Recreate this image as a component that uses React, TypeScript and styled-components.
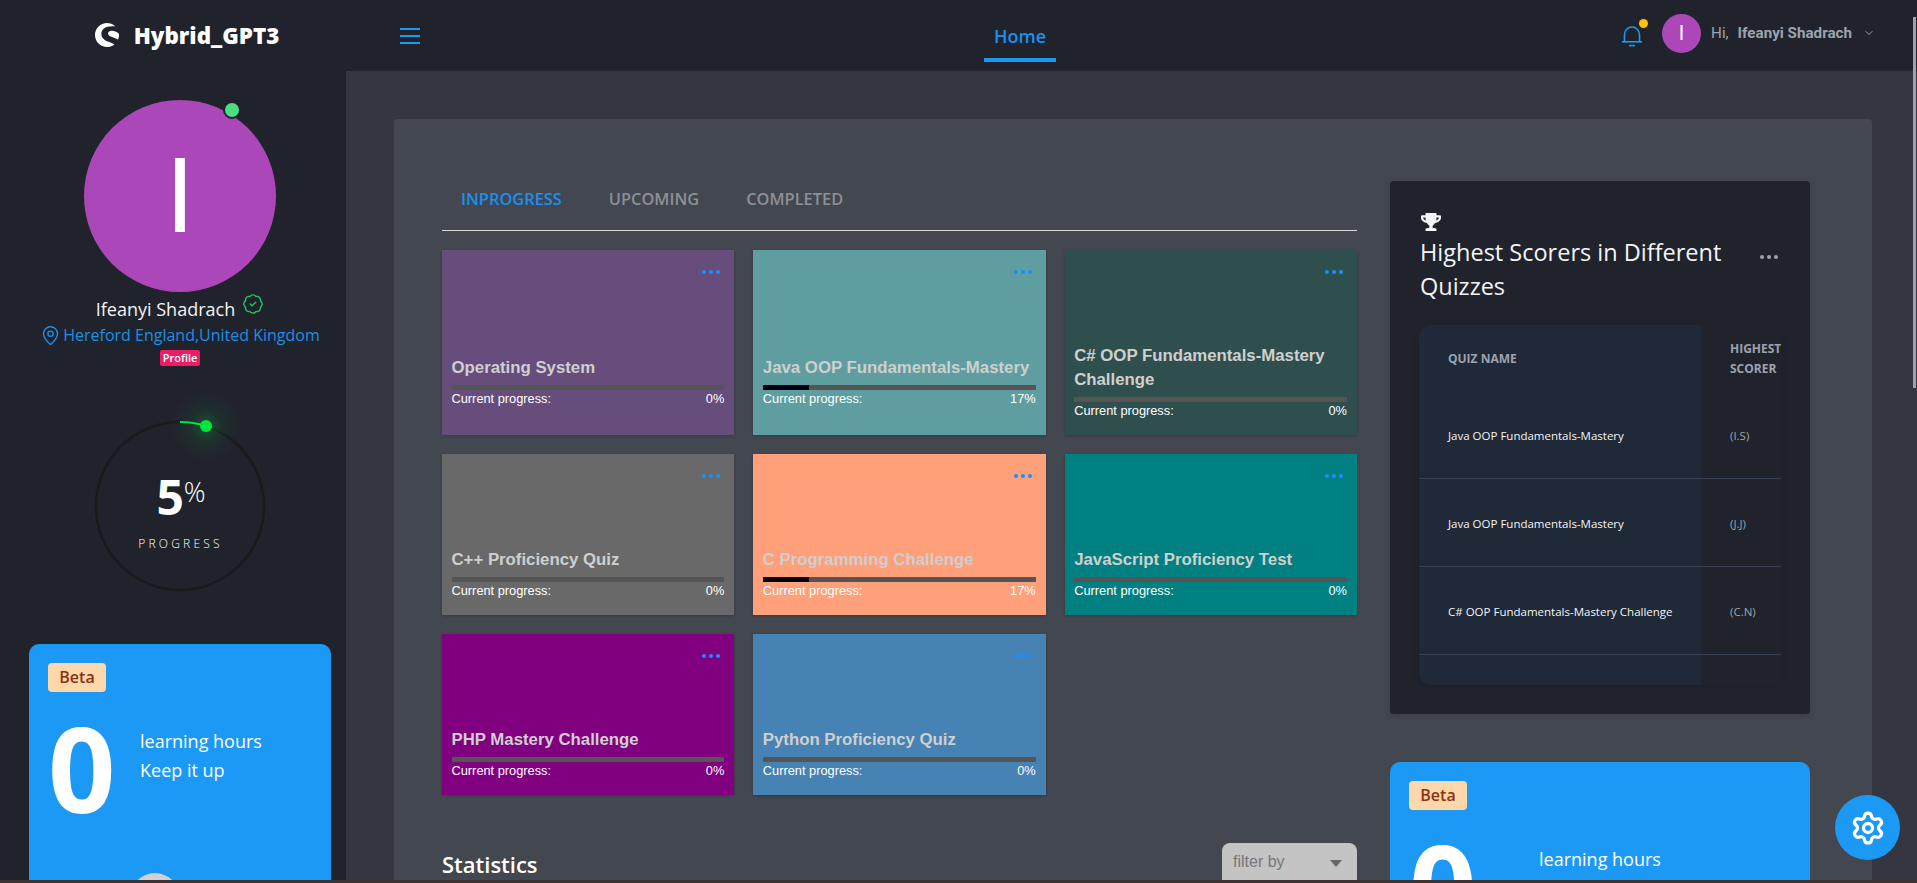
import { createGlobalStyle, styled } from 'styled-components';
import { BadgeCheck, ChevronDown, MapPin, Settings } from 'lucide-react';
import { FaTrophy } from 'react-icons/fa';
import { SiShopware } from 'react-icons/si';

const GlobalStyle = createGlobalStyle`
  html, body {
    margin: 0;
    height: 100%;
    overflow: hidden;
    background: #343740;
    font-family: 'Open Sans', sans-serif;
  }
  * {
    box-sizing: border-box;
  }
`;

const Page = styled.div`
  display: flex;
  flex-direction: column;
  height: 100vh;
`;

const Frame = styled.div`
  flex: 1;
  display: flex;
  min-height: 0;
`;

const BottomEdge = styled.div`
  height: 3px;
  background: #3b3432;
`;

/* sidebar */

const Sidebar = styled.aside`
  width: 346px;
  flex-shrink: 0;
  background: #20232c;
  display: flex;
  flex-direction: column;
  align-items: center;
  overflow: hidden;
  padding: 20px 0 0 14px;
`;

const Brand = styled.div`
  height: 30px;
  display: flex;
  align-items: center;
  gap: 15px;
  margin-left: 14px;
  color: #fff;
  font-size: 22.4px;
  font-weight: 800;
  white-space: nowrap;
`;

const AvatarWrap = styled.div`
  position: relative;
  margin-top: 50px;
`;

const Avatar = styled.div<{ $size: number; $font: number }>`
  width: ${(p) => p.$size}px;
  height: ${(p) => p.$size}px;
  border-radius: 50%;
  background: #ab47b8;
  color: #fff;
  font-family: Roboto, sans-serif;
  font-size: ${(p) => p.$font}px;
  display: flex;
  align-items: center;
  justify-content: center;
  flex-shrink: 0;
`;

const OnlineDot = styled.span`
  position: absolute;
  top: 1px;
  right: 35px;
  width: 18px;
  height: 18px;
  border-radius: 50%;
  background: #4ade80;
  border: 2px solid #20232c;
`;

const NameRow = styled.div`
  height: 24px;
  margin-top: 5px;
  display: flex;
  align-items: center;
  gap: 7px;
  color: #f3f4f6;
  font-size: 18px;
  svg {
    margin-top: -10px;
  }
`;

const LocationRow = styled.div`
  height: 24px;
  margin-top: 3px;
  display: flex;
  align-items: center;
  gap: 2px;
  color: #1e8ee6;
  font-size: 16px;
  white-space: nowrap;
`;

const ProfileBadge = styled.span`
  margin-top: 4px;
  height: 16px;
  width: 40px;
  border-radius: 2px;
  background: #e91e63;
  color: #fff;
  font-size: 11px;
  font-weight: 600;
  line-height: 16px;
  text-align: center;
`;

const Ring = styled.div`
  margin-top: 55px;
  display: grid;
  width: 170px;
  height: 170px;
  flex-shrink: 0;
  > * {
    grid-area: 1 / 1;
  }
`;

const RingCenter = styled.div`
  display: flex;
  flex-direction: column;
  align-items: center;
  padding-top: 45px;
  color: #fff;
`;

const RingValue = styled.div`
  display: flex;
  align-items: flex-start;
  margin-left: 2px;
  font-size: 48px;
  font-weight: 700;
  line-height: 62px;
  span {
    font-size: 27px;
    font-weight: 300;
    line-height: 52px;
  }
`;

const RingLabel = styled.div`
  margin-top: 7px;
  font-size: 12px;
  font-weight: 300;
  letter-spacing: 3.2px;
  margin-right: -1px;
`;

const BetaCard = styled.div<{ $width: number; $top: number }>`
  flex-shrink: 0;
  width: ${(p) => p.$width}px;
  margin-top: ${(p) => p.$top}px;
  height: 300px;
  background: #1c98f5;
  border-radius: 10px;
  padding: 19px;
  overflow: hidden;
`;

const BetaBadge = styled.span`
  display: block;
  width: 58px;
  height: 29px;
  border-radius: 4px;
  background: #fed7aa;
  color: #8a3313;
  font-size: 16px;
  font-weight: 600;
  line-height: 29px;
  text-align: center;
`;

const BetaStats = styled.div`
  display: flex;
  margin-top: 34px;
  color: #fff;
`;

const BetaZero = styled.div<{ $width: number }>`
  width: ${(p) => p.$width}px;
  flex-shrink: 0;
  font-size: 118px;
  font-weight: 700;
  line-height: 84px;
  height: 84px;
`;

const BetaText = styled.div`
  font-size: 18px;
  line-height: 29px;
  padding-top: 1px;
`;

const BetaBlob = styled.div`
  width: 50px;
  height: 50px;
  border-radius: 50%;
  background: #d1d0d6;
  margin: 63px 0 0 82px;
`;

/* main column */

const Main = styled.main`
  flex: 1;
  min-width: 0;
  display: flex;
  flex-direction: column;
  overflow: hidden;
`;

const Header = styled.header`
  height: 71px;
  flex-shrink: 0;
  background: #20232c;
  display: flex;
  align-items: center;
  padding: 0 42px 0 54px;
`;

const MenuButton = styled.div`
  width: 20px;
  display: flex;
  flex-direction: column;
  gap: 5px;
  span {
    height: 2px;
    background: #1c98f5;
  }
`;

const HomeTab = styled.div`
  margin-left: 564px;
  width: 72px;
  height: 71px;
  padding-top: 24px;
  color: #1c8ff0;
  font-size: 18px;
  font-weight: 600;
  text-align: center;
  position: relative;
  &::after {
    content: '';
    position: absolute;
    left: 0;
    right: 0;
    top: 58px;
    height: 4px;
    background: #1c98f5;
  }
`;

const HeaderRight = styled.div`
  margin-left: auto;
  padding-bottom: 5px;
  display: flex;
  align-items: center;
  color: #9ca3af;
  font-family: Roboto, sans-serif;
  font-size: 15.2px;
`;

const BellWrap = styled.div`
  position: relative;
  width: 20px;
  height: 22px;
  margin: 5px 20px 0 0;
`;

const BellDot = styled.span`
  position: absolute;
  top: -6px;
  right: -6px;
  width: 9px;
  height: 9px;
  border-radius: 50%;
  background: #fec107;
`;

const Greeting = styled.span`
  margin-left: 10px;
`;

const UserName = styled.span`
  margin-left: 9px;
  font-weight: 700;
  margin-right: 11px;
`;

const ScrollThumb = styled.div`
  position: fixed;
  top: 17px;
  right: 1px;
  width: 3px;
  height: 371px;
  background: #a1a1a1;
`;

const Content = styled.div`
  padding: 48px 45px 0 48px;
`;

const Panel = styled.section`
  background: #434750;
  border-radius: 4px;
  padding: 62px 62px 0 48px;
  display: flex;
  gap: 33px;
`;

const LeftColumn = styled.div`
  width: 915px;
  flex-shrink: 0;
`;

const Tabs = styled.nav`
  height: 50px;
  padding: 0 0 0 19px;
  display: flex;
  gap: 47px;
  border-bottom: 1px solid #d6d6d6;
`;

const Tab = styled.span<{ $active?: boolean }>`
  color: ${(p) => (p.$active ? '#1c8ff0' : '#8c9097')};
  font-size: 16.4px;
  font-weight: 600;
  line-height: 36px;
`;

const CardGrid = styled.div`
  margin-top: 19px;
  display: grid;
  grid-template-columns: repeat(3, 1fr);
  gap: 19px;
`;

const QuizCard = styled.article<{ $color: string }>`
  position: relative;
  background: ${(p) => p.$color};
  min-height: 161px;
  padding: 94px 10px 17px 9.5px;
  display: flex;
  flex-direction: column;
  justify-content: center;
  box-shadow: 0 1px 3px rgba(0, 0, 0, 0.2);
  font-family: 'Liberation Sans', Arial, sans-serif;
`;

const CardDots = styled.div<{ $color: string; $size: number }>`
  display: flex;
  gap: ${(p) => p.$size - 1}px;
  span {
    width: ${(p) => p.$size}px;
    height: ${(p) => p.$size}px;
    border-radius: 50%;
    background: ${(p) => p.$color};
  }
`;

const CardMenu = styled.div`
  position: absolute;
  top: 20px;
  right: 14px;
`;

const CardTitle = styled.h3`
  margin: 0 0 5px;
  color: #cfcfcf;
  font-size: 16.8px;
  font-weight: 700;
  line-height: 24px;
`;

const Bar = styled.div`
  height: 5px;
  background: #555;
`;

const BarFill = styled.div`
  height: 100%;
  background: #00000f;
`;

const CardFoot = styled.div`
  margin-top: 2px;
  display: flex;
  justify-content: space-between;
  color: #fff;
  font-size: 12.8px;
  line-height: 14px;
`;

const StatsRow = styled.div`
  margin-top: 48px;
  display: flex;
  justify-content: space-between;
  align-items: flex-start;
`;

const StatsTitle = styled.h2`
  margin: 0;
  padding-top: 6px;
  color: #fff;
  font-size: 22px;
  font-weight: 600;
  line-height: 30px;
`;

const FilterSelect = styled.div`
  width: 135px;
  height: 46px;
  background: #c4c4c4;
  border-radius: 8px;
  padding: 10px 15px 10px 11px;
  display: flex;
  justify-content: space-between;
  color: #777;
  font-family: 'Liberation Sans', Arial, sans-serif;
  font-size: 16px;
  &::after {
    content: '';
    margin-top: 7px;
    border-left: 6.5px solid transparent;
    border-right: 6.5px solid transparent;
    border-top: 7px solid #666;
    height: 0;
  }
`;

const RightColumn = styled.div`
  width: 420px;
  flex-shrink: 0;
`;

const ScorersCard = styled.div`
  background: #20232c;
  border-radius: 4px;
  padding: 31px 29px 29px;
  box-shadow: 0 2px 6px rgba(0, 0, 0, 0.15);
`;

const ScorersHead = styled.div`
  display: flex;
  justify-content: space-between;
  align-items: flex-start;
  margin: 4px 3px 22px 1px;
`;

const ScorersTitle = styled.h2`
  margin: 0;
  width: 340px;
  color: #f3f4f6;
  font-size: 23.5px;
  font-weight: 500;
  line-height: 33.5px;
`;

const HeadDots = styled.div`
  margin-top: 19px;
`;

const TableWrap = styled.div`
  border-radius: 12px;
  overflow: hidden;
  box-shadow: 0 4px 8px rgba(0, 0, 0, 0.08);
`;

const Table = styled.table`
  width: 362px;
  border-collapse: collapse;
  table-layout: fixed;
  font-size: 11.5px;
`;

const NameCol = styled.col`
  width: 282px;
  background: #1f2937;
`;

const ScorerCol = styled.col`
  width: 80px;
`;

const HeadCell = styled.th`
  height: 65px;
  padding: 3px 0 0 29px;
  color: #9ca3af;
  font-size: 12px;
  font-weight: 700;
  line-height: 20px;
  text-align: left;
  vertical-align: middle;
`;

const BodyRow = styled.tr`
  border-bottom: 1px solid #374151;
`;

const NameCell = styled.td`
  height: 88px;
  padding: 3px 0 0 29px;
  color: #f3f4f6;
`;

const ScorerCell = styled.td`
  padding: 3px 0 0 29px;
  color: #9ca3af;
`;

const FillerCell = styled.td`
  height: 31px;
`;

const SettingsButton = styled.div`
  position: fixed;
  right: 17px;
  bottom: 23px;
  width: 65px;
  height: 65px;
  border-radius: 50%;
  background: #1c98f5;
  color: #fff;
  display: flex;
  align-items: center;
  justify-content: center;
`;

const quizzes = [
  { title: 'Operating System', color: '#664d7c', progress: 0 },
  { title: 'Java OOP Fundamentals-Mastery', color: '#5f9ea0', progress: 17 },
  { title: 'C# OOP Fundamentals-Mastery Challenge', color: '#2f4f4f', progress: 0 },
  { title: 'C++ Proficiency Quiz', color: '#696969', progress: 0 },
  { title: 'C Programming Challenge', color: '#ffa07a', progress: 17 },
  { title: 'JavaScript Proficiency Test', color: '#008080', progress: 0 },
  { title: 'PHP Mastery Challenge', color: '#800080', progress: 0 },
  { title: 'Python Proficiency Quiz', color: '#4682b4', progress: 0 },
];

const scorers = [
  { quiz: 'Java OOP Fundamentals-Mastery', initials: '(I.S)' },
  { quiz: 'Java OOP Fundamentals-Mastery', initials: '(J.J)' },
  { quiz: 'C# OOP Fundamentals-Mastery Challenge', initials: '(C.N)' },
];

const Dots = ({ color, size }: { color: string; size: number }) => (
  <CardDots $color={color} $size={size}>
    <span />
    <span />
    <span />
  </CardDots>
);

const BellIcon = () => (
  <svg width="20" height="22" viewBox="0 0 20 22" fill="none" stroke="#1c98f5" strokeWidth="1.6">
    <path d="M2.5 16.5V9.5a7.5 7.5 0 0 1 15 0v7" />
    <path d="M0 16.8h20" />
    <path d="M7 20.6h6" />
  </svg>
);

const ProgressRing = () => (
  <svg width="170" height="170" viewBox="0 0 170 170" style={{ overflow: 'visible' }}>
    <defs>
      <radialGradient id="ringGlow">
        <stop offset="0%" stopColor="#00ff48" stopOpacity="0.22" />
        <stop offset="45%" stopColor="#00ff48" stopOpacity="0.05" />
        <stop offset="100%" stopColor="#00ff48" stopOpacity="0" />
      </radialGradient>
    </defs>
    <circle cx="85" cy="85" r="84" fill="none" stroke="#1a1a1b" strokeWidth="2.5" />
    <circle cx="111" cy="5" r="36" fill="url(#ringGlow)" />
    <path d="M85 1a84 84 0 0 1 26 4" fill="none" stroke="#00e640" strokeWidth="2" />
    <circle cx="111" cy="5" r="6" fill="#00e640" />
  </svg>
);

const HoursCard = ({ width, top, zero, blob }: { width: number; top: number; zero: number; blob?: boolean }) => (
  <BetaCard $width={width} $top={top}>
    <BetaBadge>Beta</BetaBadge>
    <BetaStats>
      <BetaZero $width={zero}>0</BetaZero>
      <BetaText>
        learning hours
        <br />
        Keep it up
      </BetaText>
    </BetaStats>
    {blob && <BetaBlob />}
  </BetaCard>
);

const App = () => {
  return (
    <Page>
      <GlobalStyle />
      <Frame>
        <Sidebar>
          <Brand>
            <SiShopware size={24} />
            Hybrid_GPT3
          </Brand>
          <AvatarWrap>
            <Avatar $size={192} $font={104}>I</Avatar>
            <OnlineDot />
          </AvatarWrap>
          <NameRow>
            Ifeanyi Shadrach
            <BadgeCheck size={22} color="#22c55e" strokeWidth={1.5} />
          </NameRow>
          <LocationRow>
            <MapPin size={21} strokeWidth={1.6} />
            Hereford England,United Kingdom
          </LocationRow>
          <ProfileBadge>Profile</ProfileBadge>
          <Ring>
            <ProgressRing />
            <RingCenter>
              <RingValue>
                5<span>%</span>
              </RingValue>
              <RingLabel>PROGRESS</RingLabel>
            </RingCenter>
          </Ring>
          <HoursCard width={302} top={53} zero={92} blob />
        </Sidebar>
        <Main>
          <Header>
            <MenuButton>
              <span />
              <span />
              <span />
            </MenuButton>
            <HomeTab>Home</HomeTab>
            <HeaderRight>
              <BellWrap>
                <BellIcon />
                <BellDot />
              </BellWrap>
              <Avatar $size={39} $font={20}>I</Avatar>
              <Greeting>Hi,</Greeting>
              <UserName>Ifeanyi Shadrach</UserName>
              <ChevronDown size={12} />
            </HeaderRight>
          </Header>
          <Content>
            <Panel>
              <LeftColumn>
                <Tabs>
                  <Tab $active>INPROGRESS</Tab>
                  <Tab>UPCOMING</Tab>
                  <Tab>COMPLETED</Tab>
                </Tabs>
                <CardGrid>
                  {quizzes.map((quiz) => (
                    <QuizCard key={quiz.title} $color={quiz.color}>
                      <CardMenu>
                        <Dots color="#1890ff" size={4} />
                      </CardMenu>
                      <CardTitle>{quiz.title}</CardTitle>
                      <Bar>
                        <BarFill style={{ width: `${quiz.progress}%` }} />
                      </Bar>
                      <CardFoot>
                        <span>Current progress:</span>
                        <span>{quiz.progress}%</span>
                      </CardFoot>
                    </QuizCard>
                  ))}
                </CardGrid>
                <StatsRow>
                  <StatsTitle>Statistics</StatsTitle>
                  <FilterSelect>filter by</FilterSelect>
                </StatsRow>
              </LeftColumn>
              <RightColumn>
                <ScorersCard>
                  <FaTrophy size={20} color="#f3f4f6" style={{ display: 'block', marginLeft: 2 }} />
                  <ScorersHead>
                    <ScorersTitle>Highest Scorers in Different Quizzes</ScorersTitle>
                    <HeadDots>
                      <Dots color="#9ca3af" size={4} />
                    </HeadDots>
                  </ScorersHead>
                  <TableWrap>
                    <Table>
                      <colgroup>
                        <NameCol />
                        <ScorerCol />
                      </colgroup>
                      <thead>
                        <tr>
                          <HeadCell>QUIZ NAME</HeadCell>
                          <HeadCell>HIGHEST SCORER</HeadCell>
                        </tr>
                      </thead>
                      <tbody>
                        {scorers.map((row, i) => (
                          <BodyRow key={i}>
                            <NameCell>{row.quiz}</NameCell>
                            <ScorerCell>{row.initials}</ScorerCell>
                          </BodyRow>
                        ))}
                        <tr>
                          <FillerCell />
                          <FillerCell />
                        </tr>
                      </tbody>
                    </Table>
                  </TableWrap>
                </ScorersCard>
                <HoursCard width={420} top={48} zero={130} />
              </RightColumn>
            </Panel>
          </Content>
          <ScrollThumb />
        </Main>
      </Frame>
      <BottomEdge />
      <SettingsButton>
        <Settings size={36} strokeWidth={2.2} />
      </SettingsButton>
    </Page>
  );
};

export default App;
